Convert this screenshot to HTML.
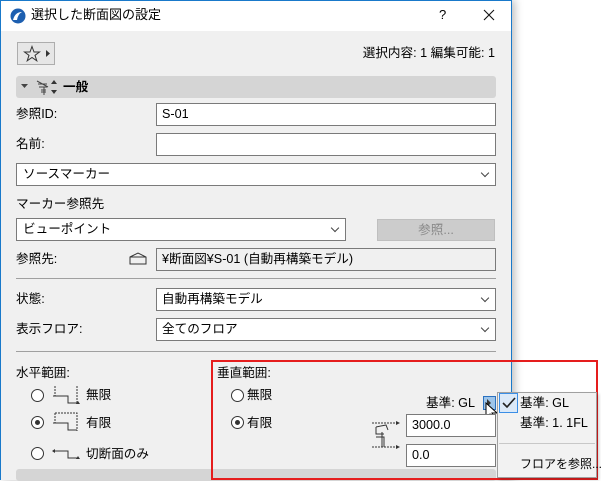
<!DOCTYPE html>
<html><head><meta charset="utf-8"><style>
*{box-sizing:border-box;margin:0;padding:0}
body{width:601px;height:480px;background:#fff;position:relative;overflow:hidden;font-family:"Liberation Sans","Noto Sans CJK JP",sans-serif;font-size:12.6px;color:#000}
.a{position:absolute}
.dlg{left:0;top:0;width:512px;height:480px;border:1px solid #1979ca;border-bottom:none;background:#f0f0f0;box-shadow:3px 0 8px rgba(0,0,0,.25)}
.tb{left:1px;top:1px;width:510px;height:30px;background:#fff}
.inp{background:#fff;border:1px solid #7a7a7a;height:23px;padding-left:5px;line-height:21px}
.sel:after{content:"";position:absolute;right:7px;top:6px;width:5px;height:5px;border-right:1px solid #444;border-bottom:1px solid #444;transform:rotate(45deg)}
.t{white-space:nowrap;line-height:14px}
.sep{height:1px;background:#a0a0a0}
.rad{width:13px;height:13px;border:1px solid #333;border-radius:50%;background:#fff}
.rad.on:after{content:"";position:absolute;left:3px;top:3px;width:5px;height:5px;border-radius:50%;background:#333}
</style></head><body>
<div class="a dlg"></div>
<div class="a tb"></div>
<svg class="a" style="left:10px;top:8px" width="16" height="16"><circle cx="8" cy="8" r="7.5" fill="#1d5fb0"/><path d="M3 12 Q5 4 12 4 Q8 6 7 12Z" fill="#fff"/></svg>
<div class="a t" style="left:31px;top:8px;font-size:13px">選択した断面図の設定</div>
<div class="a t" style="left:439px;top:8px;font-size:13px">?</div>
<svg class="a" style="left:483px;top:9px" width="12" height="12"><path d="M1 1L11 11M11 1L1 11" stroke="#111" stroke-width="1.1"/></svg>
<div class="a" style="left:17px;top:42px;width:38px;height:23px;border:1px solid #adadad;background:#e6e6e6"></div>
<svg class="a" style="left:23px;top:45px" width="18" height="17"><path d="M9 1.5L11 7H16.5L12 10.3L13.8 15.8L9 12.5L4.2 15.8L6 10.3L1.5 7H7Z" fill="none" stroke="#333" stroke-width="1"/></svg>
<svg class="a" style="left:46px;top:50px" width="5" height="7"><path d="M0 0L4 3.5L0 7Z" fill="#333"/></svg>
<div class="a t" style="right:106px;top:46px">選択内容: 1 編集可能: 1</div>
<div class="a" style="left:16px;top:76px;width:480px;height:22px;background:#d5d5d5;border-radius:3px"></div>
<svg class="a" style="left:21px;top:84px" width="8" height="5"><path d="M0 0H7L3.5 4Z" fill="#444"/></svg>
<svg class="a" style="left:36px;top:78px" width="22" height="18"><path d="M1 3L12 9M2 6H11M3 9H11M5 12H10M5 14H10M8 9V17" stroke="#444" stroke-width="1" fill="none"/><path d="M15 6L18 2L21 6ZM15 12L18 16L21 12Z" fill="#333"/></svg>
<div class="a t" style="left:63px;top:80px;font-weight:bold">一般</div>
<div class="a t" style="left:16px;top:107px">参照ID:</div>
<div class="a inp" style="left:156px;top:103px;width:340px">S-01</div>
<div class="a t" style="left:16px;top:137px">名前:</div>
<div class="a inp" style="left:156px;top:133px;width:340px"></div>
<div class="a inp sel" style="left:16px;top:163px;width:480px;padding-left:6px">ソースマーカー</div>
<div class="a t" style="left:16px;top:197px">マーカー参照先</div>
<div class="a inp sel" style="left:16px;top:218px;width:330px;padding-left:6px">ビューポイント</div>
<div class="a t" style="left:377px;top:219px;width:118px;height:22px;background:#cccccc;border:1px solid #bfbfbf;color:#8a8a8a;text-align:center;line-height:20px">参照...</div>
<div class="a t" style="left:16px;top:252px">参照先:</div>
<svg class="a" style="left:129px;top:252px" width="18" height="13"><path d="M1 5L9 1L17 5V12H1Z" fill="none" stroke="#333"/><path d="M1 5H17" stroke="#333"/></svg>
<div class="a inp" style="left:156px;top:248px;width:340px;background:#f0f0f0">¥断面図¥S-01 (自動再構築モデル)</div>
<div class="a sep" style="left:16px;top:278px;width:480px"></div>
<div class="a t" style="left:16px;top:292px">状態:</div>
<div class="a inp sel" style="left:156px;top:288px;width:340px">自動再構築モデル</div>
<div class="a t" style="left:16px;top:322px">表示フロア:</div>
<div class="a inp sel" style="left:156px;top:318px;width:340px">全てのフロア</div>
<div class="a sep" style="left:16px;top:351px;width:480px"></div>
<div class="a t" style="left:16px;top:366px">水平範囲:</div>
<div class="a rad" style="left:31px;top:389px"></div>
<svg class="a" style="left:50px;top:384px" width="30" height="22"><path d="M5 2V12M5 12H18V19H27M27 2V19" stroke="#333" stroke-dasharray="2 1" fill="none"/><path d="M3 12H18V19H27" stroke="#333" fill="none"/><path d="M26 20L28 17L30 20Z" fill="#333"/></svg>
<div class="a t" style="left:86px;top:388px">無限</div>
<div class="a rad on" style="left:31px;top:416px"></div>
<svg class="a" style="left:50px;top:411px" width="30" height="22"><path d="M5 2H27V20M5 2V12" stroke="#333" stroke-dasharray="2 1" fill="none"/><path d="M3 12H18V19H27" stroke="#333" fill="none"/></svg>
<div class="a t" style="left:86px;top:416px">有限</div>
<div class="a rad" style="left:31px;top:447px"></div>
<svg class="a" style="left:50px;top:446px" width="30" height="16"><path d="M3 5H18V12H27" stroke="#333" fill="none"/><path d="M26 13L28 10L30 13Z M2 5L5 3V7Z" fill="#333"/></svg>
<div class="a t" style="left:86px;top:447px">切断面のみ</div>
<div class="a" style="left:16px;top:469px;width:480px;height:12px;background:#d5d5d5;border-radius:3px"></div>
<div class="a t" style="left:217px;top:366px">垂直範囲:</div>
<div class="a rad" style="left:231px;top:389px"></div>
<div class="a t" style="left:247px;top:388px">無限</div>
<div class="a rad on" style="left:231px;top:416px"></div>
<div class="a t" style="left:247px;top:416px">有限</div>
<div class="a t" style="right:126px;top:396px">基準: GL</div>
<div class="a" style="left:483px;top:396px;width:13px;height:14px;background:#9ec5ea;border:1px solid #2a71c0"></div>
<svg class="a" style="left:487px;top:399px" width="5" height="8"><path d="M0 0L4 4L0 8Z" fill="#333"/></svg>
<svg class="a" style="left:485px;top:402px" width="14" height="22"><path d="M1 1V16L5 12L8 19L10 18L7 11H12Z" fill="#fff" stroke="#000"/></svg>
<svg class="a" style="left:372px;top:420px" width="32" height="30"><path d="M0 3H24M0 27H24" stroke="#333" stroke-dasharray="2 1"/><path d="M4 7L14 5L16 10M4 7V14H12M4 17H12V27M10 12V27" stroke="#333" fill="none"/><path d="M24 1L28 3L24 5ZM24 25L28 27L24 29Z" fill="#333"/></svg>
<div class="a inp" style="left:406px;top:414px;width:90px">3000.0</div>
<div class="a inp" style="left:406px;top:444px;width:90px">0.0</div>
<div class="a" style="left:211px;top:360px;width:387px;height:120px;border:2px solid #e51d1d"></div>
<div class="a" style="left:497px;top:392px;width:100px;height:86px;background:#f2f2f2;border:1px solid #a0a0a0;box-shadow:2px 2px 3px rgba(0,0,0,.2)"></div>
<div class="a" style="left:499px;top:393px;width:19px;height:20px;border:1px solid #3a8ee6;background:#dbe9f8"></div>
<svg class="a" style="left:502px;top:397px" width="14" height="12"><path d="M1 6L5 10L13 1" stroke="#222" stroke-width="1.6" fill="none"/></svg>
<div class="a t" style="left:520px;top:396px">基準: GL</div>
<div class="a t" style="left:520px;top:416px">基準: 1. 1FL</div>
<div class="a sep" style="left:499px;top:443px;width:96px;background:#c8c8c8"></div>
<div class="a t" style="left:520px;top:457px;font-size:12px">フロアを参照...</div>
</body></html>
